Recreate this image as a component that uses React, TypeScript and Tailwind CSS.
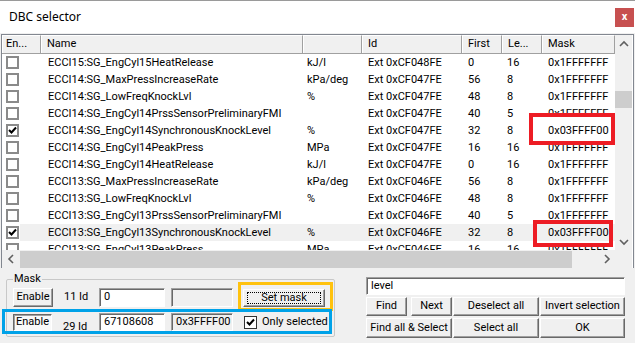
import React from 'react';

type Row = { on?: boolean; hl?: boolean; name: string; unit: string; id: string; first: string; len: string; mask: string };

const rows: Row[] = [
    { name: 'ECCI15:SG_EngCyl15HeatRelease', unit: 'kJ/l', id: 'Ext 0xCF048FE', first: '0', len: '16', mask: '0x1FFFFFFF' },
    { name: 'ECCI14:SG_MaxPressIncreaseRate', unit: 'kPa/deg', id: 'Ext 0xCF047FE', first: '56', len: '8', mask: '0x1FFFFFFF' },
    { name: 'ECCI14:SG_LowFreqKnockLvl', unit: '%', id: 'Ext 0xCF047FE', first: '48', len: '8', mask: '0x1FFFFFFF' },
    { name: 'ECCI14:SG_EngCyl14PrssSensorPreliminaryFMI', unit: '', id: 'Ext 0xCF047FE', first: '40', len: '5', mask: '0x1FFFFFFF' },
    { on: true, name: 'ECCI14:SG_EngCyl14SynchronousKnockLevel', unit: '%', id: 'Ext 0xCF047FE', first: '32', len: '8', mask: '0x03FFFF00' },
    { name: 'ECCI14:SG_EngCyl14PeakPress', unit: 'MPa', id: 'Ext 0xCF047FE', first: '16', len: '16', mask: '0x1FFFFFFF' },
    { name: 'ECCI14:SG_EngCyl14HeatRelease', unit: 'kJ/l', id: 'Ext 0xCF047FE', first: '0', len: '16', mask: '0x1FFFFFFF' },
    { name: 'ECCI13:SG_MaxPressIncreaseRate', unit: 'kPa/deg', id: 'Ext 0xCF046FE', first: '56', len: '8', mask: '0x1FFFFFFF' },
    { name: 'ECCI13:SG_LowFreqKnockLvl', unit: '%', id: 'Ext 0xCF046FE', first: '48', len: '8', mask: '0x1FFFFFFF' },
    { name: 'ECCI13:SG_EngCyl13PrssSensorPreliminaryFMI', unit: '', id: 'Ext 0xCF046FE', first: '40', len: '5', mask: '0x1FFFFFFF' },
    { on: true, hl: true, name: 'ECCI13:SG_EngCyl13SynchronousKnockLevel', unit: '%', id: 'Ext 0xCF046FE', first: '32', len: '8', mask: '0x03FFFF00' },
    { name: 'ECCI13:SG_EngCyl13PeakPress', unit: 'MPa', id: 'Ext 0xCF046FE', first: '16', len: '16', mask: '0x1FFFFFFF' },
];

const cols = "grid grid-cols-[39px_262px_59px_100px_40px_40px_73px]";
const btn = "flex items-center justify-center whitespace-nowrap bg-[#f0f0f0] border border-t-white border-l-white border-r-[#696969] border-b-[#696969] shadow-[inset_-1px_-1px_0_#a0a0a0] text-[11px] text-black";
const sunken = "flex items-center whitespace-nowrap border border-t-[#a0a0a0] border-l-[#a0a0a0] border-r-white border-b-white shadow-[inset_1px_1px_0_#696969] text-[11px] pl-[4px]";

const Check = () => (
    <svg width="9" height="9" viewBox="0 0 9 9"><path d="M1 4 L3.5 6.5 L8 1.5" fill="none" stroke="#000" strokeWidth="2" /></svg>
);

const Box = ({ on }: { on?: boolean }) => (
    <div className="w-[13px] h-[13px] shrink-0 bg-white border-2 border-[#8a8a8a] flex items-center justify-center">
        {on && <Check />}
    </div>
);

const Chevron = ({ dir }: { dir: 'up' | 'down' | 'left' | 'right' }) => {
    const d = {
        up: 'M1 6 L5 2 L9 6',
        down: 'M1 2 L5 6 L9 2',
        left: 'M6 1 L2 5 L6 9',
        right: 'M2 1 L6 5 L2 9',
    }[dir];
    const size = dir === 'up' || dir === 'down' ? { w: 10, h: 8 } : { w: 8, h: 10 };
    return (
        <svg width={size.w} height={size.h} viewBox={`0 0 ${size.w} ${size.h}`}>
            <path d={d} fill="none" stroke="#606060" strokeWidth="1.6" />
        </svg>
    );
};

export default function App() {
    return (
        <div className="relative w-[635px] h-[343px] overflow-hidden bg-[#f0f0f0] font-['Roboto',Arial,sans-serif] text-black">
            {/* Title bar */}
            <div className="h-[33px] bg-white border-t border-[#9a9a9a] flex items-center justify-between">
                <span className="pl-[9px] text-[12px] font-['Noto_Sans',sans-serif]">DBC selector</span>
                <div className="w-[19px] h-[19px] mr-[1px] bg-[#c75050] flex items-center justify-center text-white text-[11px] font-bold leading-none pb-[2px]">x</div>
            </div>

            {/* List view */}
            <div className="ml-[1px] mt-[1px] w-[633px] flex border-l border-t border-r border-[#828790] bg-white">
                <div className="w-[613px] flex flex-col">
                    <div className={`${cols} h-[19px] text-[11px]`}>
                        {['En...', 'Name', '', 'Id', 'First', 'Le...', 'Mask'].map((h, i) => (
                            <div key={i} className={`flex items-center bg-[#f0f0f0] border-r border-b border-r-[#a0a0a0] border-b-[#a0a0a0] border-t border-t-white shadow-[inset_1px_0_0_#ffffff] whitespace-nowrap overflow-hidden ${i === 0 ? 'pl-[4px]' : i === 2 ? 'pl-[4px]' : 'pl-[6px]'}`}>{h}</div>
                        ))}
                    </div>
                    <div className="h-[196px] overflow-hidden">
                        {rows.map((r, i) => (
                            <div key={i} className={`${cols} h-[17px] text-[11px] leading-[17px] whitespace-nowrap`}>
                                <div className="flex items-center pl-[4px]">
                                    <Box on={r.on} />
                                    <div className={`ml-[1px] flex-1 h-full ${r.hl ? 'bg-[#f0f0f0]' : ''}`} />
                                </div>
                                <div className={`pl-[7px] overflow-hidden ${r.hl ? 'bg-[#f0f0f0]' : ''}`}>{r.name}</div>
                                <div className={`pl-[4px] overflow-hidden ${r.hl ? 'bg-[#f0f0f0]' : ''}`}>{r.unit}</div>
                                <div className={`pl-[6px] overflow-hidden ${r.hl ? 'bg-[#f0f0f0]' : ''}`}>{r.id}</div>
                                <div className={`pl-[6px] overflow-hidden ${r.hl ? 'bg-[#f0f0f0]' : ''}`}>{r.first}</div>
                                <div className={`pl-[5px] overflow-hidden ${r.hl ? 'bg-[#f0f0f0]' : ''}`}>{r.len}</div>
                                <div className={`pl-[6px] overflow-hidden ${r.hl ? 'bg-[#f0f0f0]' : ''}`}>{r.mask}</div>
                            </div>
                        ))}
                    </div>
                    {/* Horizontal scrollbar */}
                    <div className="h-[18px] flex items-center bg-[#f0f0f0]">
                        <div className="w-[17px] h-full flex items-center justify-center"><Chevron dir="left" /></div>
                        <div className="ml-[1px] w-[552px] h-[17px] bg-[#cdcdcd]" />
                        <div className="flex-1" />
                        <div className="w-[17px] h-full flex items-center justify-center"><Chevron dir="right" /></div>
                    </div>
                </div>
                {/* Vertical scrollbar */}
                <div className="w-[17px] flex flex-col bg-[#f0f0f0]">
                    <div className="h-[17px] flex items-center justify-center"><Chevron dir="up" /></div>
                    <div className="mt-[39px] h-[17px] bg-[#cdcdcd]" />
                    <div className="flex-1" />
                    <div className="h-[17px] flex items-center justify-center mb-[18px]"><Chevron dir="down" /></div>
                </div>
            </div>

            {/* Bottom controls */}
            <div className="flex">
                <fieldset className="ml-[6px] mt-[4px] w-[329px] h-[65px] border border-[#c8c8c8] rounded-[2px] px-[6px] pt-[2px]">
                    <legend className="px-[1px] text-[11px] leading-[14px]">Mask</legend>
                    <div className="flex items-center h-[19px]">
                        <div className={`${btn} w-[40px] h-[19px]`}>Enable</div>
                        <div className="w-[46px] pl-[11px] text-[11px] whitespace-nowrap">11 Id</div>
                        <div className={`${sunken} w-[66px] h-[19px] bg-white`}>0</div>
                        <div className={`${sunken} ml-[6px] w-[62px] h-[19px] bg-[#f0f0f0]`} />
                        <div className={`${btn} ml-[10px] w-[82px] h-[18px]`}>
                            <div className="w-[74px] h-[12px] border border-dotted border-black flex items-center justify-center leading-none">Set mask</div>
                        </div>
                    </div>
                    <div className="flex items-center h-[18px] mt-[6px]">
                        <div className="w-[39px] h-[17px] flex items-center justify-center bg-[#f9f9f9] border border-t-[#696969] border-l-[#696969] border-r-white border-b-white shadow-[inset_1px_1px_0_#a0a0a0] text-[11px]">Enable</div>
                        <div className="w-[47px] pl-[11px] text-[11px] whitespace-nowrap self-end leading-[12px] -mb-[2px]">29 Id</div>
                        <div className={`${sunken} w-[66px] h-[18px] bg-white`}>67108608</div>
                        <div className={`${sunken} ml-[6px] w-[62px] h-[18px] bg-[#f0f0f0]`}>0x3FFFF00</div>
                        <div className="ml-[11px] w-[13px] h-[13px] shrink-0 bg-white border border-[#333] flex items-center justify-center"><Check /></div>
                        <span className="ml-[5px] text-[11px] whitespace-nowrap">Only selected</span>
                    </div>
                </fieldset>

                <div className="ml-[31px] pt-[9px] w-[259px] flex flex-col">
                    <div className={`${sunken} h-[18px] bg-white`}>level</div>
                    <div className="flex mt-[2px] h-[19px]">
                        <div className={`${btn} w-[41px]`}>Find</div>
                        <div className={`${btn} ml-[4px] w-[41px]`}>Next</div>
                        <div className={`${btn} ml-[1px] w-[86px]`}>Deselect all</div>
                        <div className={`${btn} ml-[1px] w-[85px]`}>Invert selection</div>
                    </div>
                    <div className="flex mt-[2px] h-[20px]">
                        <div className={`${btn} w-[86px]`}>Find all &amp; Select</div>
                        <div className={`${btn} ml-[1px] w-[86px]`}>Select all</div>
                        <div className={`${btn} ml-[1px] w-[85px]`}>OK</div>
                    </div>
                </div>
            </div>

            {/* Annotation rectangles */}
            <div className="absolute left-[529px] top-[113px] w-[86px] h-[32px] border-4 border-[#ed1c24]" />
            <div className="absolute left-[533px] top-[220px] w-[80px] h-[27px] border-4 border-[#ed1c24]" />
            <div className="absolute left-[238px] top-[282px] w-[95px] h-[29px] border-[3px] border-[#ffc20e]" />
            <div className="absolute left-[2px] top-[309px] w-[330px] h-[25px] border-[3px] border-[#00a2e8]" />
        </div>
    );
}
